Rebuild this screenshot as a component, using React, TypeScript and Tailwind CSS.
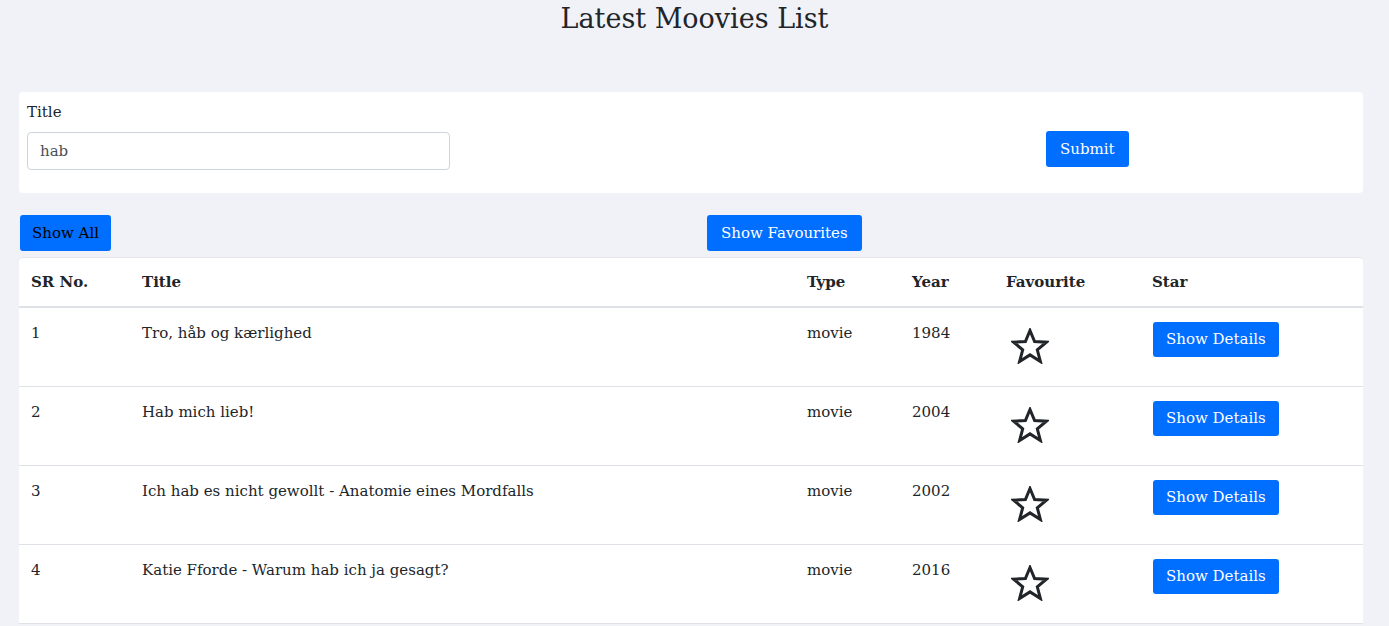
import React from 'react'

const MOVIES = [
  { id: 1, title: 'Tro, håb og kærlighed', type: 'movie', year: '1984' },
  { id: 2, title: 'Hab mich lieb!', type: 'movie', year: '2004' },
  { id: 3, title: 'Ich hab es nicht gewollt - Anatomie eines Mordfalls', type: 'movie', year: '2002' },
  { id: 4, title: 'Katie Fforde - Warum hab ich ja gesagt?', type: 'movie', year: '2016' },
]

function StarOutline() {
  return (
    <svg width="38" height="36" viewBox="0 0 38 36" className="block">
      <polygon
        points="19,2.5 23.6,13.6 35.5,14.2 26.3,21.8 29.4,33.5 19,26.9 8.6,33.5 11.7,21.8 2.5,14.2 14.4,13.6"
        fill="none"
        stroke="#212529"
        strokeWidth="3"
        strokeLinejoin="miter"
      />
    </svg>
  )
}

export default function App() {
  return (
    <div className="bg-[#f0f2f7] text-[#212529] font-['DejaVu_Serif',serif] overflow-hidden h-[626px]">
      <h1 className="text-center text-[27px] leading-[36px] pt-[1px]">Latest Moovies List</h1>

      <div className="pl-[19px] pt-[55px] pr-[26px]">
        {/* Search form */}
        <div className="bg-white rounded-[4px] h-[101px] pl-2 flex items-start">
          <div className="w-[423px] pt-[10px]">
            <label className="block text-[15px] leading-[20px]">Title</label>
            <input
              defaultValue="hab"
              className="mt-[10px] w-full h-[38px] border border-[#ced4da] rounded-[4px] px-3 text-[15px] text-[#495057] outline-none font-['DejaVu_Serif',serif]"
            />
          </div>
          <button className="ml-[596px] mt-[39px] bg-[#006eff] text-white rounded-[3px] h-[36px] px-[14px] text-[15px] font-['DejaVu_Serif',serif]">
            Submit
          </button>
        </div>

        {/* Action buttons */}
        <div className="flex items-center mt-[22px]">
          <button className="bg-[#006eff] text-black rounded-[3px] h-[36px] px-3 text-[15px] ml-[1px] font-['DejaVu_Serif',serif]">
            Show All
          </button>
          <button className="ml-[596px] bg-[#006eff] text-white rounded-[3px] h-[36px] px-[14px] text-[15px] font-['DejaVu_Serif',serif]">
            Show Favourites
          </button>
        </div>

        {/* Table */}
        <div className="bg-white rounded-t-[4px] mt-[6px] border-t border-[#e4e6ea]">
          <table className="w-full border-collapse text-[15px]">
            <colgroup>
              <col className="w-[111px]" />
              <col className="w-[665px]" />
              <col className="w-[105px]" />
              <col className="w-[94px]" />
              <col className="w-[146px]" />
              <col />
            </colgroup>
            <thead>
              <tr className="h-[49px] border-b-2 border-[#dee2e6] text-left">
                <th className="pl-3 font-bold">SR No.</th>
                <th className="pl-3 font-bold">Title</th>
                <th className="pl-3 font-bold">Type</th>
                <th className="pl-3 font-bold">Year</th>
                <th className="pl-3 font-bold">Favourite</th>
                <th className="pl-3 font-bold">Star</th>
              </tr>
            </thead>
            <tbody>
              {MOVIES.map(m => (
                <tr key={m.id} className="h-[79px] border-b border-[#dee2e6] align-top">
                  <td className="pl-3 pt-[14px]">{m.id}</td>
                  <td className="pl-3 pt-[14px]">{m.title}</td>
                  <td className="pl-3 pt-[14px]">{m.type}</td>
                  <td className="pl-3 pt-[14px]">{m.year}</td>
                  <td className="pl-[17px] pt-[20px]">
                    <StarOutline />
                  </td>
                  <td className="pl-[13px] pt-[14px]">
                    <button className="bg-[#006eff] text-white rounded-[3px] h-[35px] px-[13px] text-[15px] font-['DejaVu_Serif',serif]">
                      Show Details
                    </button>
                  </td>
                </tr>
              ))}
            </tbody>
          </table>
        </div>
      </div>
    </div>
  )
}
